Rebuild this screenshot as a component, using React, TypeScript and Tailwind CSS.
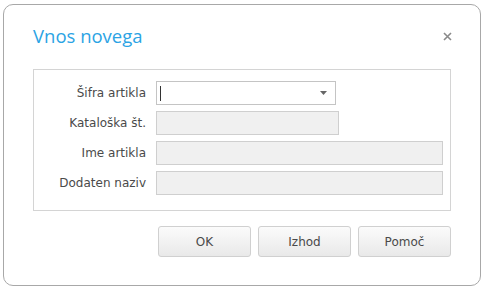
import React from "react";

const lbl = "text-[12px] text-[#4a4a4a] text-right w-[122px] pr-[10px] leading-none";
const inputDis = "h-[24px] border border-[#cfcfcf] bg-[#f0f0f0]";

export default function App() {
  return (
    <div className="w-[482px] h-[288px] bg-white pt-[4px] pl-[3px]" style={{ fontFamily: '"DejaVu Sans", sans-serif' }}>
      <div className="w-[478px] h-[282px] border border-[#a8a8a8] rounded-[10px] bg-white flex flex-col">
        <div className="flex items-center justify-between h-[64px] pl-[29px] pr-[28px] pb-[3px]">
          <div className="text-[18.5px] text-[#2ba3e4]" style={{ fontFamily: '"Open Sans", sans-serif' }}>Vnos novega</div>
          <svg width="9" height="9" viewBox="0 0 9 9" className="mt-[1px]">
            <path d="M1 1 L8 8 M8 1 L1 8" stroke="#8a8a8a" strokeWidth="1.6" />
          </svg>
        </div>
        <div className="ml-[29px] w-[418px] h-[142px] border border-[#d4d4d4] pt-[11px] flex flex-col gap-[6px]">
          <div className="flex items-center">
            <div className={lbl}>Šifra artikla</div>
            <div className="h-[24px] w-[180px] border border-[#c4c4c4] bg-white flex items-center justify-between pl-[3px] pr-[8px]">
              <div className="w-[1px] h-[15px] bg-[#333]" />
              <svg width="7" height="4" viewBox="0 0 7 4"><path d="M0 0 L7 0 L3.5 4 Z" fill="#666" /></svg>
            </div>
          </div>
          <div className="flex items-center">
            <div className={lbl}>Kataloška št.</div>
            <div className={`${inputDis} w-[183px]`} />
          </div>
          <div className="flex items-center">
            <div className={lbl}>Ime artikla</div>
            <div className={`${inputDis} w-[287px]`} />
          </div>
          <div className="flex items-center">
            <div className={lbl}>Dodaten naziv</div>
            <div className={`${inputDis} w-[287px]`} />
          </div>
        </div>
        <div className="flex justify-end gap-[7px] pr-[29px] pt-[15px]">
          {["OK", "Izhod", "Pomoč"].map((t) => (
            <div key={t} className="w-[93px] h-[31px] border border-[#d0d0d0] rounded-[3px] bg-gradient-to-b from-[#fbfbfb] to-[#e9e9e9] flex items-center justify-center text-[12px] text-[#4a4a4a]">
              {t}
            </div>
          ))}
        </div>
      </div>
    </div>
  );
}
